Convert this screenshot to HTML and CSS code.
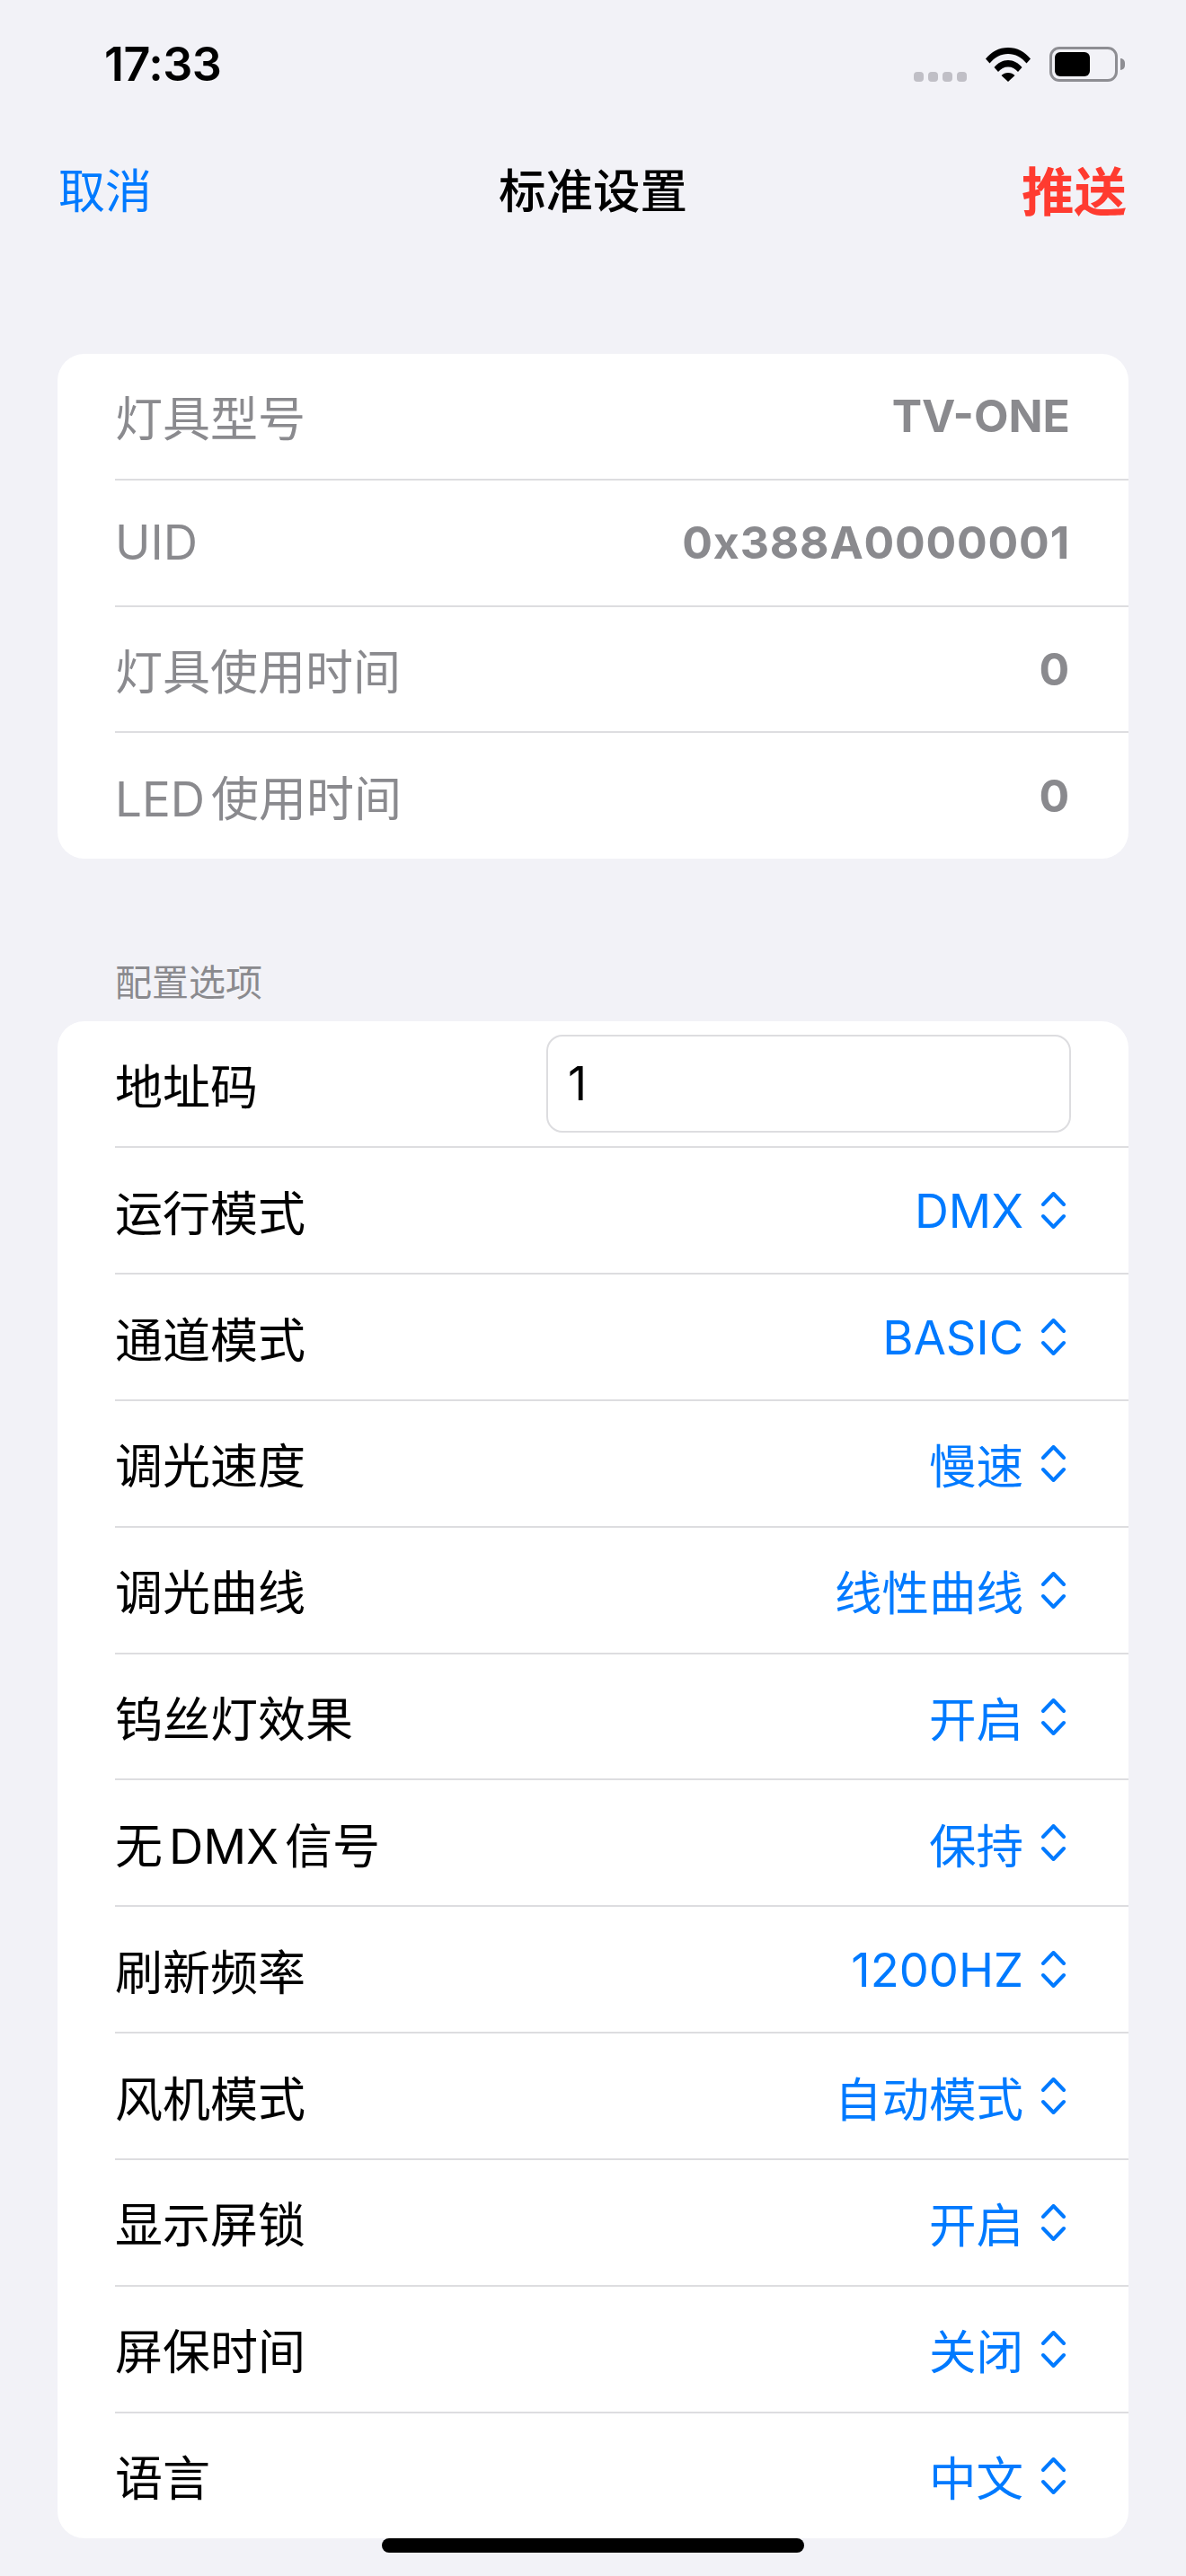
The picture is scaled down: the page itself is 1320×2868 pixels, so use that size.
FILE: index.html
```html
<!DOCTYPE html>
<html lang="zh">
<head>
<meta charset="utf-8">
<title>标准设置</title>
<link rel="stylesheet" href="styles.css">
</head>
<body>
<div class="screen">
  <header class="status">
    <span class="time">17:33</span>
    <div class="status-icons">
      <div class="signal"><i></i><i></i><i></i><i></i></div>
      <svg class="wifi" viewBox="0 0 50 39"><path d="M0 13.500C6.500 5.500 15 1 25 1s18.500 4.500 25 12.500l-4.500 5C40 12 33 8 25 8S10 12 4.500 18.500z"/><path d="M9.500 23C13.500 18 19 15 25 15s11.500 3 15.500 8L36 28c-3-3.500-6.500-5.500-11-5.500S17 24.500 14 28z"/><path d="M17.500 32c2-2 4.500-3 7.500-3s5.500 1 7.500 3L25 39z"/></svg>
      <div class="battery"><div class="battery-body"><div class="battery-fill"></div></div><div class="battery-nub"></div></div>
    </div>
  </header>
  <nav class="nav">
    <span class="cancel">取消</span>
    <span class="title">标准设置</span>
    <span class="push">推送</span>
  </nav>
  <section class="card info">
    <div class="row"><span>灯具型号</span><b class="model">TV-ONE</b></div>
    <div class="row"><span>UID</span><b>0x388A0000001</b></div>
    <div class="row"><span>灯具使用时间</span><b>0</b></div>
    <div class="row"><span>LED 使用时间</span><b>0</b></div>
  </section>
  <h2 class="section-title">配置选项</h2>
  <section class="card">
    <div class="row"><span>地址码</span><div class="field">1</div></div>
    <div class="row"><span>运行模式</span><div class="picker">DMX<svg class="chev" viewBox="0 0 27 41"><path d="M2 14 13.500 2 25 14M2 27l11.500 12L25 27"/></svg></div></div>
    <div class="row"><span>通道模式</span><div class="picker">BASIC<svg class="chev" viewBox="0 0 27 41"><path d="M2 14 13.500 2 25 14M2 27l11.500 12L25 27"/></svg></div></div>
    <div class="row"><span>调光速度</span><div class="picker">慢速<svg class="chev" viewBox="0 0 27 41"><path d="M2 14 13.500 2 25 14M2 27l11.500 12L25 27"/></svg></div></div>
    <div class="row"><span>调光曲线</span><div class="picker">线性曲线<svg class="chev" viewBox="0 0 27 41"><path d="M2 14 13.500 2 25 14M2 27l11.500 12L25 27"/></svg></div></div>
    <div class="row"><span>钨丝灯效果</span><div class="picker">开启<svg class="chev" viewBox="0 0 27 41"><path d="M2 14 13.500 2 25 14M2 27l11.500 12L25 27"/></svg></div></div>
    <div class="row"><span>无 DMX 信号</span><div class="picker">保持<svg class="chev" viewBox="0 0 27 41"><path d="M2 14 13.500 2 25 14M2 27l11.500 12L25 27"/></svg></div></div>
    <div class="row"><span>刷新频率</span><div class="picker">1200HZ<svg class="chev" viewBox="0 0 27 41"><path d="M2 14 13.500 2 25 14M2 27l11.500 12L25 27"/></svg></div></div>
    <div class="row"><span>风机模式</span><div class="picker">自动模式<svg class="chev" viewBox="0 0 27 41"><path d="M2 14 13.500 2 25 14M2 27l11.500 12L25 27"/></svg></div></div>
    <div class="row"><span>显示屏锁</span><div class="picker">开启<svg class="chev" viewBox="0 0 27 41"><path d="M2 14 13.500 2 25 14M2 27l11.500 12L25 27"/></svg></div></div>
    <div class="row"><span>屏保时间</span><div class="picker">关闭<svg class="chev" viewBox="0 0 27 41"><path d="M2 14 13.500 2 25 14M2 27l11.500 12L25 27"/></svg></div></div>
    <div class="row"><span>语言</span><div class="picker">中文<svg class="chev" viewBox="0 0 27 41"><path d="M2 14 13.500 2 25 14M2 27l11.500 12L25 27"/></svg></div></div>
  </section>
  <div class="home-indicator"></div>
</div>
</body>
</html>
```
FILE: styles.css
```css
* { box-sizing: border-box; }
html, body { margin: 0; padding: 0; }
body {
  background: #f2f2f7;
  font-family: Inter, "Noto Sans CJK SC", sans-serif;
  color: #000;
}
.screen { width: 1320px; height: 2868px; position: relative; overflow: hidden; }

.status {
  height: 100px;
  padding: 44px 68px 0 116px;
  display: flex;
  justify-content: space-between;
  align-items: flex-start;
}
.time { font-size: 52px; font-weight: 600; line-height: 56px; letter-spacing: -0.5px; }
.status-icons { display: flex; align-items: flex-start; padding-top: 8px; }
.signal { display: flex; gap: 5px; margin-top: 28px; margin-right: 21px; }
.signal i { width: 11px; height: 11px; border-radius: 4px; background: #c0bfc6; }
.wifi { width: 50px; height: 39px; fill: #000; margin-right: 21px; }
.battery { display: flex; align-items: center; height: 39px; }
.battery-body {
  width: 76px; height: 39px;
  border: 3px solid #8e8e93;
  border-radius: 11px;
  padding: 3px;
}
.battery-fill { width: 39px; height: 27px; background: #000; border-radius: 6px; }
.battery-nub { width: 5px; height: 13px; margin-left: 3px; background: #8e8e93; border-radius: 0 5px 5px 0; }

.nav {
  height: 294px;
  padding: 0 66px 76px 65px;
  display: flex;
  justify-content: space-between;
  align-items: center;
  position: relative;
}
.cancel { font-size: 52px; color: #007aff; }
.title {
  font-size: 52.500px; font-weight: 500;
  position: absolute; left: 555px; top: 0; height: 218px;
  display: flex; align-items: center;
}
.push { font-size: 58.500px; font-weight: 700; color: #ff3b30; }

.card {
  margin: 0 64px;
  background: #fff;
  border-radius: 30px;
  overflow: hidden;
}
.row {
  height: 140.830px;
  margin-left: 64px;
  padding-right: 65px;
  display: flex;
  align-items: center;
  justify-content: space-between;
  font-size: 53px;
  word-spacing: -8px;
  border-bottom: 2px solid #dddde0;
}
.row:last-child { border-bottom: 0; height: 139.500px; }
.info .row { color: #8a8a8e; }
.info .row b { font-size: 50px; font-weight: 700; letter-spacing: 0.8px; color: #8a8a8e; }
.info .row b.model { letter-spacing: 0; }

.section-title {
  margin: 113px 0 0;
  padding-left: 128px;
  height: 68.500px;
  font-size: 41px;
  line-height: 50px;
  font-weight: 400;
  color: #8a8a8e;
}

.field {
  width: 584px; height: 109px;
  border: 2px solid #dddde0;
  border-radius: 18px;
  background: #fff;
  padding-left: 22px;
  margin-right: -1px;
  display: flex; align-items: center;
  font-size: 52px;
}
.picker { display: flex; align-items: center; gap: 20px; color: #007aff; font-size: 52.500px; padding-right: 5px; }
.chev { width: 27px; height: 41px; fill: none; stroke: #007aff; stroke-width: 4px; stroke-linecap: round; stroke-linejoin: round; }

.home-indicator {
  position: absolute; left: 425px; top: 2826px;
  width: 470px; height: 16px;
  border-radius: 8px; background: #000;
}
```
